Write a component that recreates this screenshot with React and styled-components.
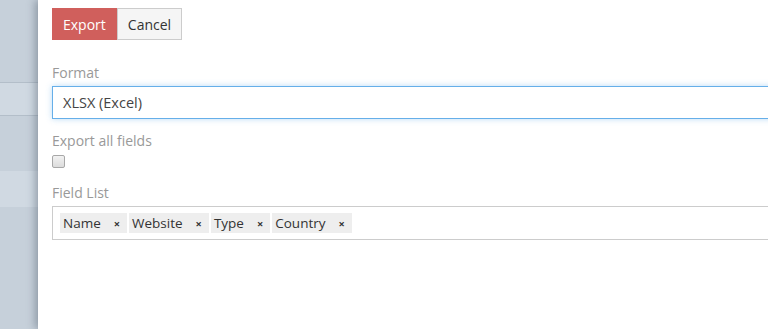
import React from "react";
import styled, { createGlobalStyle } from "styled-components";

const GlobalStyle = createGlobalStyle`
  html, body {
    margin: 0;
    padding: 0;
    height: 100%;
    overflow: hidden;
    background: #fff;
    font-family: "Open Sans", "Liberation Sans", sans-serif;
  }
  #root { height: 100%; }
`;

const Page = styled.div`
  display: flex;
  height: 329px;
  width: 100%;
  overflow: hidden;
`;

const Sidebar = styled.div`
  width: 38px;
  flex: none;
  display: flex;
  flex-direction: column;
  background: #c6d0da;
  padding-top: 82px;
`;

const SideRow = styled.div`
  height: ${(p) => p.h}px;
  background: ${(p) => (p.light ? "#d0d9e2" : "#c6d0da")};
  border-top: ${(p) => (p.line ? "1px solid #b3bec9" : "none")};
`;

const Panel = styled.div`
  flex: none;
  width: 800px;
  background: #fff;
  padding: 8px 0 0 14px;
  box-shadow: -3px 0 8px rgba(60, 75, 90, 0.4);
  position: relative;
`;

const ButtonRow = styled.div`
  display: flex;
  margin-bottom: 23px;
`;

const Button = styled.button`
  height: 32px;
  padding: 0 10px;
  font-family: inherit;
  font-size: 14px;
  border: 1px solid ${(p) => (p.primary ? "#d05f5c" : "#ccc")};
  background: ${(p) => (p.primary ? "#d05f5c" : "#f5f5f5")};
  color: ${(p) => (p.primary ? "#fff" : "#333")};
  border-radius: 0;
  cursor: pointer;
`;

const Group = styled.div`
  margin-bottom: ${(p) => p.mb || 12}px;
`;

const Label = styled.div`
  font-size: 14px;
  color: #999;
  line-height: 20px;
  margin-bottom: 3px;
`;

const Select = styled.div`
  height: 31px;
  border: 1px solid #66afe9;
  box-shadow: 0 0 6px rgba(102, 175, 233, 0.45);
  display: flex;
  align-items: center;
  padding-left: 10px;
  font-size: 14.5px;
  color: #444;
`;

const Checkbox = styled.input`
  appearance: none;
  margin: 4px 0 0;
  width: 13px;
  height: 13px;
  display: block;
  border: 1px solid #a8a8a8;
  border-radius: 2px;
  background: linear-gradient(#f2f2f2, #dcdcdc);
`;

const TagBox = styled.div`
  height: 32px;
  border: 1px solid #ccc;
  display: flex;
  align-items: center;
  padding-left: 7px;
  gap: 2px;
`;

const Tag = styled.span`
  background: #eee;
  height: 20px;
  display: flex;
  align-items: center;
  padding: 0 7px 0 3px;
  font-size: 13.5px;
  color: #333;
`;

const Remove = styled.span`
  margin-left: 13px;
  font-size: 11px;
  font-weight: 700;
  color: #333;
`;

const fields = ["Name", "Website", "Type", "Country"];

export default function App() {
  return (
    <Page>
      <GlobalStyle />
      <Sidebar>
        <SideRow h={32} light line />
        <SideRow h={56} line />
        <SideRow h={36} light />
        <SideRow h={123} />
      </Sidebar>
      <Panel>
        <ButtonRow>
          <Button primary>Export</Button>
          <Button>Cancel</Button>
        </ButtonRow>
        <Group>
          <Label>Format</Label>
          <Select>XLSX (Excel)</Select>
        </Group>
        <Group mb={15}>
          <Label>Export all fields</Label>
          <Checkbox type="checkbox" />
        </Group>
        <Group>
          <Label>Field List</Label>
          <TagBox>
            {fields.map((f) => (
              <Tag key={f}>
                {f}
                <Remove>×</Remove>
              </Tag>
            ))}
          </TagBox>
        </Group>
      </Panel>
    </Page>
  );
}
